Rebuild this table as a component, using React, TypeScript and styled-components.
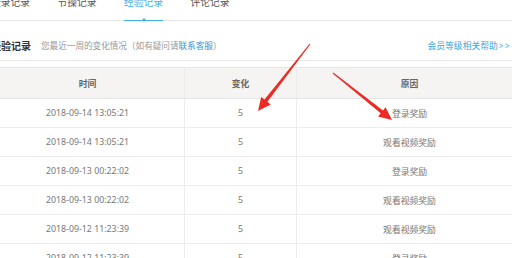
import React from "react";
import styled, { createGlobalStyle } from "styled-components";

const GlobalStyle = createGlobalStyle`
  html, body {
    margin: 0;
    padding: 0;
    background: #fff;
    overflow: hidden;
  }
  body {
    font-family: "Noto Sans", "Noto Sans CJK SC", sans-serif;
    color: #666;
  }
`;

type Record = { time: string; change: number; reason: string };

const records: Record[] = [
  { time: "2018-09-14 13:05:21", change: 5, reason: "登录奖励" },
  { time: "2018-09-14 13:05:21", change: 5, reason: "观看视频奖励" },
  { time: "2018-09-13 00:22:02", change: 5, reason: "登录奖励" },
  { time: "2018-09-13 00:22:02", change: 5, reason: "观看视频奖励" },
  { time: "2018-09-12 11:23:39", change: 5, reason: "观看视频奖励" },
  { time: "2018-09-12 11:23:39", change: 5, reason: "登录奖励" },
];

const tabs = ["登录记录", "节操记录", "经验记录", "评论记录"];

// tapered red arrow, wide end at the head
const arrowPoints = (
  x0: number,
  y0: number,
  x1: number,
  y1: number,
  headLen = 13,
  headW = 12,
  tailW = 1,
  neckW = 3.6
) => {
  const dx = x1 - x0;
  const dy = y1 - y0;
  const len = Math.hypot(dx, dy);
  const ux = dx / len;
  const uy = dy / len;
  const nx = -uy;
  const ny = ux;
  const neckX = x1 - ux * headLen;
  const neckY = y1 - uy * headLen;
  const p = (x: number, y: number) => `${x.toFixed(1)},${y.toFixed(1)}`;
  return [
    p(x0 + (nx * tailW) / 2, y0 + (ny * tailW) / 2),
    p(neckX + (nx * neckW) / 2, neckY + (ny * neckW) / 2),
    p(neckX + (nx * headW) / 2, neckY + (ny * headW) / 2),
    p(x1, y1),
    p(neckX - (nx * headW) / 2, neckY - (ny * headW) / 2),
    p(neckX - (nx * neckW) / 2, neckY - (ny * neckW) / 2),
    p(x0 - (nx * tailW) / 2, y0 - (ny * tailW) / 2),
  ].join(" ");
};

const App = () => {
  const active = 2;
  return (
    <>
      <GlobalStyle />
      <Page>
        <Tabs>
          {tabs.map((t, i) => (
            <Tab key={t} active={i === active}>
              {t}
            </Tab>
          ))}
        </Tabs>

        <Heading>
          <Title>经验记录</Title>
          <Sub>
            您最近一周的变化情况（如有疑问请<LinkText>联系客服</LinkText>）
          </Sub>
          <Help>
            会员等级相关帮助<Chevrons>&gt;&gt;</Chevrons>
          </Help>
        </Heading>

        <Table>
          <HeadRow>
            <Cell>时间</Cell>
            <Cell>变化</Cell>
            <Cell>原因</Cell>
          </HeadRow>
          {records.map((r, i) => (
            <Row key={i}>
              <Cell>{r.time}</Cell>
              <Cell>{r.change}</Cell>
              <Cell>{r.reason}</Cell>
            </Row>
          ))}
        </Table>
      </Page>

      <Marks width="512" height="258" viewBox="0 0 512 258">
        <polygon points={arrowPoints(310, 44, 258, 111)} fill="#ee2a24" />
        <polygon points={arrowPoints(333, 73, 392, 120)} fill="#ee2a24" />
      </Marks>
    </>
  );
};

const Page = styled.div`
  width: 531px;
  margin: -3px 0 0 -9px;
`;

const Tabs = styled.div`
  display: flex;
  gap: 27.5px;
  border-bottom: 1px solid #e6e6e6;
`;

const Tab = styled.div<{ active: boolean }>`
  position: relative;
  font-size: 9.75px;
  line-height: 12px;
  padding-bottom: 11px;
  margin-bottom: -1px;
  white-space: nowrap;
  color: ${({ active }) => (active ? "#3db3e6" : "#555")};
  border-bottom: 1.5px solid ${({ active }) => (active ? "#3db3e6" : "transparent")};
  ${({ active }) =>
    active &&
    `
    &::after {
      content: "";
      position: absolute;
      left: 50%;
      bottom: 0;
      margin-left: -2px;
      border-left: 2px solid transparent;
      border-right: 2px solid transparent;
      border-bottom: 2px solid #3db3e6;
    }
  `}
`;

const Heading = styled.div`
  display: flex;
  align-items: center;
  padding: 19px 22px 8px 0;
  line-height: 12px;
  border-bottom: 1px solid #e8e8e8;
  white-space: nowrap;
`;

const Title = styled.div`
  font-size: 10px;
  font-weight: bold;
  color: #333;
`;

const Sub = styled.div`
  margin-left: 10px;
  font-size: 8.6px;
  color: #999;
`;

const LinkText = styled.span`
  color: #2a9bd8;
`;

const Help = styled.div`
  margin-left: auto;
  margin-right: -11px;
  font-size: 8.8px;
  color: #37a6df;
`;

const Chevrons = styled.span`
  margin-left: 1px;
  letter-spacing: 1.5px;
  font-size: 8px;
`;

const Table = styled.div`
  margin-top: 6px;
  border-top: 1px solid #e6e6e6;
`;

const Row = styled.div`
  display: grid;
  grid-template-columns: 193px 112px 1fr;
  height: 28px;
  border-bottom: 1px solid #ececec;
  font-size: 8.8px;
  color: #777;
`;

const HeadRow = styled(Row)`
  height: 30px;
  background: #f5f4f2;
  border-bottom-color: #e6e6e6;
  color: #666;
  font-weight: 600;
`;

const Cell = styled.div`
  display: flex;
  align-items: center;
  justify-content: center;
  white-space: nowrap;
  & + & {
    border-left: 1px solid #ececec;
  }
`;

const Marks = styled.svg`
  position: fixed;
  left: 0;
  top: 0;
  pointer-events: none;
`;

export default App;
